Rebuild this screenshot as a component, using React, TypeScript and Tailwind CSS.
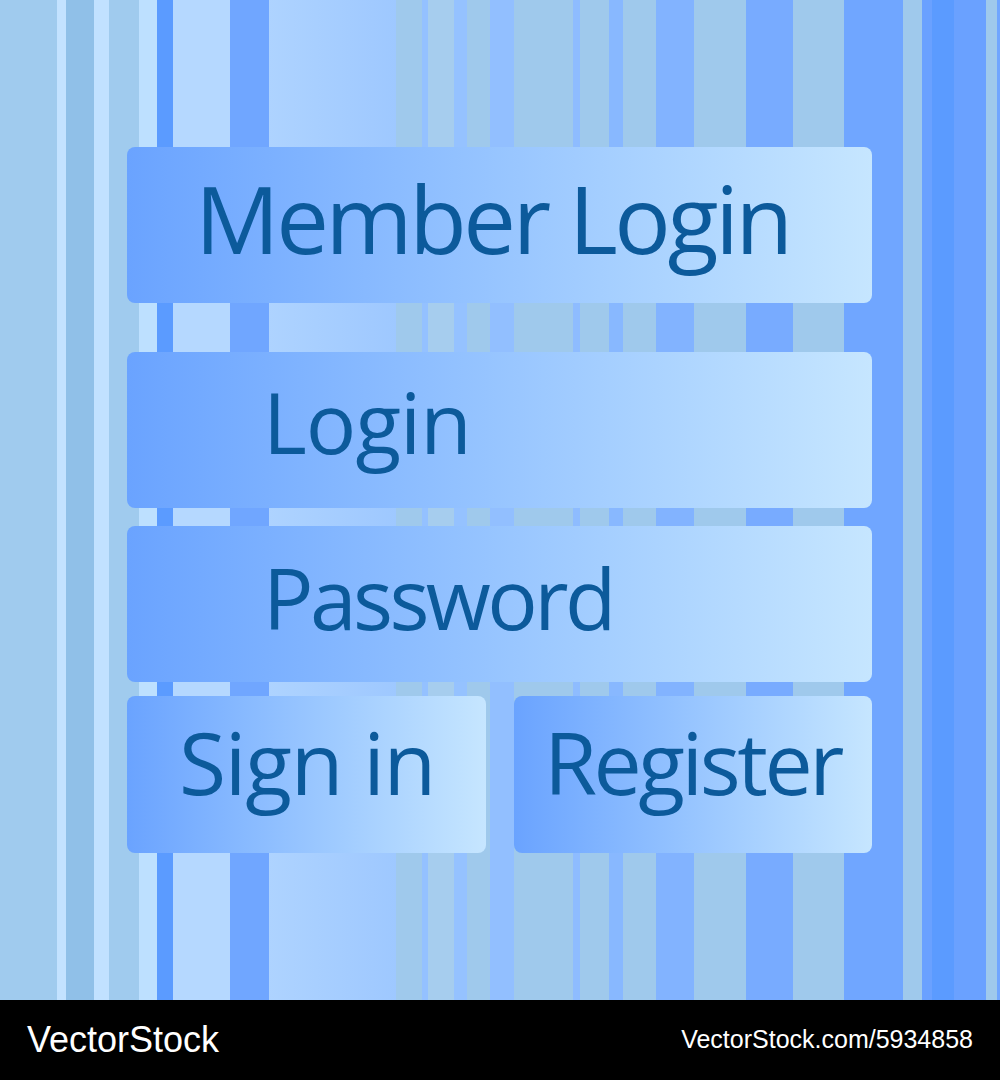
const stripes = [
  "w-[57px] bg-[#a0cbee]",
  "w-[9px] bg-[#c3e2ff]",
  "w-[28px] bg-[#90c0e8]",
  "w-[15px] bg-[#c1e1ff]",
  "w-[30px] bg-[#a0cbee]",
  "w-[18px] bg-[#bde0ff]",
  "w-[16px] bg-[#5b9bff]",
  "w-[57px] bg-[#b5d8ff]",
  "w-[39px] bg-[#70a6ff]",
  "w-[127px] bg-gradient-to-r from-[#aed3ff] to-[#9ec8ff]",
  "w-[26px] bg-[#9fc9ec]",
  "w-[6px] bg-[#94c1ff]",
  "w-[26px] bg-[#a6cdee]",
  "w-[13px] bg-[#95c2ff]",
  "w-[23px] bg-[#9fc9ec]",
  "w-[24px] bg-[#92bfff]",
  "w-[59px] bg-[#9fc9ec]",
  "w-[7px] bg-[#8ebcff]",
  "w-[29px] bg-[#9fc9ec]",
  "w-[14px] bg-[#88b8ff]",
  "w-[33px] bg-[#9fc9ec]",
  "w-[38px] bg-[#82b3ff]",
  "w-[52px] bg-[#9fc9ec]",
  "w-[47px] bg-[#78abff]",
  "w-[51px] bg-[#9fc9ec]",
  "w-[59px] bg-[#70a6ff]",
  "w-[19px] bg-[#9fc9ec]",
  "w-[10px] bg-[#6aa1ff]",
  "w-[22px] bg-[#5b9bff]",
  "w-[32px] bg-[#6aa1ff]",
  "w-[11px] bg-[#9fc9ec]",
  "w-[3px] bg-[#70a6ff]",
]

const panel =
  "flex items-center rounded-lg bg-gradient-to-r from-[#6aa3ff] to-[#c6e6ff] text-[#0c5a9b] leading-none"

export default function App() {
  return (
    <div className="w-[1000px] h-[1080px] flex flex-col font-['Open_Sans',sans-serif]">
      <div className="relative h-[1000px] overflow-hidden">
        {/* striped backdrop */}
        <div className="absolute inset-0 flex">
          {stripes.map((s, i) => (
            <div key={i} className={`h-full shrink-0 ${s}`} />
          ))}
        </div>

        <div className="relative pt-[147px] pl-[127px] w-[872px] flex flex-col">
          <div className={`${panel} h-[156px] pl-[68px] pb-[14px] text-[94px] tracking-[-3.4px]`}>
            Member Login
          </div>
          <div className={`${panel} h-[156px] mt-[49px] pl-[136px] pb-[16px] text-[84px] tracking-[-1px]`}>
            Login
          </div>
          <div className={`${panel} h-[156px] mt-[18px] pl-[136px] pb-[12px] text-[84px] tracking-[-3.6px]`}>
            Password
          </div>
          <div className="flex gap-[28px] mt-[14px]">
            <button className={`${panel} w-[359px] h-[157px] pl-[52px] pb-[26px] text-[86px] tracking-[-1.3px]`}>
              Sign in
            </button>
            <button className={`${panel} w-[358px] h-[157px] pl-[30px] pb-[26px] text-[86px] tracking-[-3.5px]`}>
              Register
            </button>
          </div>
        </div>
      </div>

      <div className="h-[80px] bg-black flex items-center justify-between px-[27px] text-white font-['Liberation_Sans',Arial,sans-serif]">
        <span className="text-[36px]">VectorStock</span>
        <span className="text-[25px]">VectorStock.com/5934858</span>
      </div>
    </div>
  )
}
